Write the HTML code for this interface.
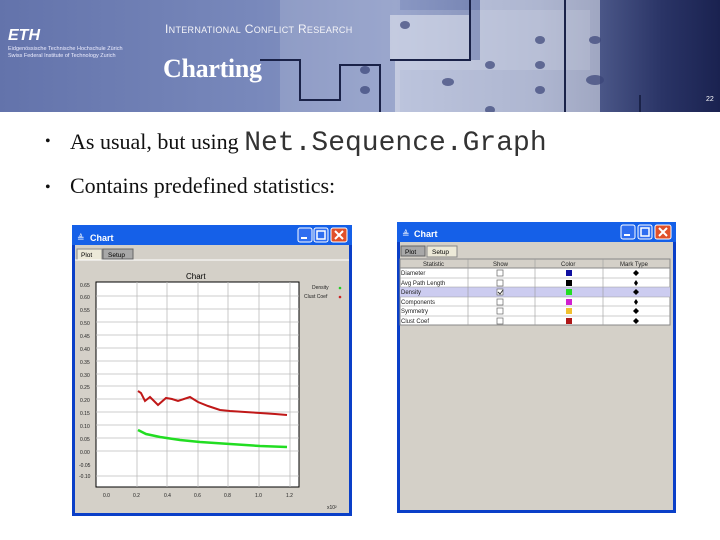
<!DOCTYPE html>
<html><head><style>
body{margin:0;width:720px;height:540px;background:#fff;position:relative;overflow:hidden;font-family:"Liberation Serif",serif}
.hdr{position:absolute;left:0;top:0;width:720px;height:112px;background:linear-gradient(90deg,#6373ab 0%,#7888bb 35%,#8a98c4 55%,#6a78a8 75%,#2a3466 92%,#1a2250 100%)}
.b{position:absolute;font-size:22px;color:#111;white-space:nowrap}
.d{position:absolute;font-size:16px;color:#111}
</style></head><body>
<div class="hdr">
<svg width="720" height="112" style="position:absolute;left:0;top:0">
<g fill="#fff" opacity="0.15"><rect x="280" y="0" width="120" height="112"/><rect x="390" y="10" width="200" height="60"/></g>
<g fill="#e6e9f2" opacity="0.55"><rect x="390" y="15" width="80" height="45"/><rect x="395" y="60" width="200" height="52"/><rect x="480" y="0" width="120" height="112"/></g>
<g fill="none" stroke="#1a2248" stroke-width="2"><path d="M260 60 H300 V100 H340 V65 H380 V112"/><path d="M390 60 H470 V0"/><path d="M490 125 V130 H575 V112"/><path d="M480 125 H640 V95"/><path d="M565 0 V112"/></g>
<g fill="#3a4478" opacity="0.7"><ellipse cx="405" cy="25" rx="5" ry="4"/><ellipse cx="448" cy="82" rx="6" ry="4"/><ellipse cx="490" cy="65" rx="5" ry="4"/><ellipse cx="540" cy="65" rx="5" ry="4"/><ellipse cx="540" cy="90" rx="5" ry="4"/><ellipse cx="490" cy="110" rx="5" ry="4"/><ellipse cx="595" cy="80" rx="9" ry="5"/><ellipse cx="595" cy="40" rx="6" ry="4"/><ellipse cx="540" cy="40" rx="5" ry="4"/><ellipse cx="365" cy="70" rx="5" ry="4"/><ellipse cx="365" cy="90" rx="5" ry="4"/></g>
<text x="8" y="40" font-family="Liberation Sans" font-weight="bold" font-style="italic" font-size="16" fill="#fff">ETH</text>
<text x="8" y="50" font-family="Liberation Sans" font-size="5.5" fill="#eef">Eidgenössische Technische Hochschule Zürich</text>
<text x="8" y="57" font-family="Liberation Sans" font-size="5.5" fill="#eef">Swiss Federal Institute of Technology Zurich</text>
<text x="165" y="33" font-family="Liberation Sans" font-size="12" fill="#f4f4f8" letter-spacing="0.3">I<tspan font-size="9">NTERNATIONAL</tspan> C<tspan font-size="9">ONFLICT</tspan> R<tspan font-size="9">ESEARCH</tspan></text>
<text x="163" y="77" font-family="Liberation Serif" font-weight="bold" font-size="26" fill="#fff" letter-spacing="-0.3">Charting</text>
<text x="706" y="101" font-family="Liberation Sans" font-size="7" fill="#fff">22</text>
</svg></div>
<div class="d" style="left:45px;top:133px">•</div>
<div class="b" style="left:70px;top:127px">As usual, but using <span style="font-family:'Liberation Mono',monospace;font-size:28px;color:#333;position:relative;top:1px">Net.Sequence.Graph</span></div>
<div class="d" style="left:45px;top:179px">•</div>
<div class="b" style="left:70px;top:173px">Contains predefined statistics:</div>

<svg width="720" height="540" style="position:absolute;left:0;top:0" font-family="Liberation Sans">
<rect x="72" y="225" width="280" height="291" fill="#0a3fc8"/>
<rect x="75" y="245" width="274" height="268" fill="#d4d0c8"/>
<rect x="72" y="225" width="280" height="20" fill="#1560e8"/>
<text x="90" y="241" font-size="9" font-weight="bold" fill="#fff">Chart</text>
<text x="77" y="241" font-size="9" fill="#fff">≜</text>
<rect x="298" y="228" width="14" height="14" rx="2" fill="#2f6ef0" stroke="#fff"/><rect x="301" y="237" width="6" height="2" fill="#fff"/>
<rect x="314" y="228" width="14" height="14" rx="2" fill="#2f6ef0" stroke="#fff"/><rect x="317" y="231" width="8" height="8" fill="none" stroke="#fff" stroke-width="1.5"/>
<rect x="331" y="228" width="16" height="14" rx="2" fill="#e0502a" stroke="#fff"/><path d="M335 231 L343 239 M343 231 L335 239" stroke="#fff" stroke-width="2"/>
<rect x="77" y="249" width="25" height="11" fill="#ece9d8" stroke="#888"/><text x="81" y="257" font-size="6.5">Plot</text>
<rect x="103" y="249" width="30" height="10" fill="#a8a8a8" stroke="#666"/><text x="108" y="257" font-size="6.5">Setup</text>
<line x1="75" y1="260" x2="349" y2="260" stroke="#fff"/>
<text x="186" y="279" font-size="8">Chart</text>
<rect x="96" y="282" width="203" height="205" fill="#fff" stroke="#000"/>
<g stroke="#bbb" stroke-width="0.8">
<line x1="137" y1="282" x2="137" y2="487"/><line x1="167" y1="282" x2="167" y2="487"/><line x1="198" y1="282" x2="198" y2="487"/><line x1="228" y1="282" x2="228" y2="487"/><line x1="259" y1="282" x2="259" y2="487"/><line x1="290" y1="282" x2="290" y2="487"/>
<line x1="96" y1="296" x2="299" y2="296"/><line x1="96" y1="309" x2="299" y2="309"/><line x1="96" y1="322" x2="299" y2="322"/><line x1="96" y1="335" x2="299" y2="335"/><line x1="96" y1="348" x2="299" y2="348"/><line x1="96" y1="361" x2="299" y2="361"/><line x1="96" y1="374" x2="299" y2="374"/><line x1="96" y1="386" x2="299" y2="386"/><line x1="96" y1="399" x2="299" y2="399"/><line x1="96" y1="412" x2="299" y2="412"/><line x1="96" y1="425" x2="299" y2="425"/><line x1="96" y1="438" x2="299" y2="438"/><line x1="96" y1="451" x2="299" y2="451"/><line x1="96" y1="476" x2="299" y2="476"/>
</g>
<g font-size="5" fill="#222">
<text x="80" y="287">0.65</text><text x="80" y="299">0.60</text><text x="80" y="312">0.55</text><text x="80" y="325">0.50</text><text x="80" y="338">0.45</text><text x="80" y="351">0.40</text><text x="80" y="364">0.35</text><text x="80" y="377">0.30</text><text x="80" y="389">0.25</text><text x="80" y="402">0.20</text><text x="80" y="415">0.15</text><text x="80" y="428">0.10</text><text x="80" y="441">0.05</text><text x="80" y="454">0.00</text><text x="79" y="467">-0.05</text><text x="79" y="478">-0.10</text>
<text x="103" y="497">0.0</text><text x="133" y="497">0.2</text><text x="164" y="497">0.4</text><text x="194" y="497">0.6</text><text x="224" y="497">0.8</text><text x="255" y="497">1.0</text><text x="286" y="497">1.2</text>
<text x="327" y="509">x10²</text>
<text x="312" y="289">Density</text><text x="304" y="298">Clust Coef</text>
</g>
<circle cx="340" cy="288" r="1.3" fill="#2c2"/><circle cx="340" cy="297" r="1.3" fill="#c22"/>
<path d="M138 391 L141 393 L145 401 L150 397 L158 405 L166 398 L172 399 L178 401 L190 397 L198 402 L208 406 L220 410 L230 411 L245 412 L260 413 L275 414 L287 415" fill="none" stroke="#c01818" stroke-width="2"/>
<path d="M138 430 L146 434 L160 437 L180 440 L200 442 L230 444 L260 446 L287 447" fill="none" stroke="#22dd22" stroke-width="2.5"/>
<rect x="397" y="222" width="279" height="291" fill="#0a3fc8"/>
<rect x="400" y="242" width="273" height="268" fill="#d4d0c8"/>
<rect x="397" y="222" width="279" height="20" fill="#1560e8"/>
<text x="414" y="237" font-size="9" font-weight="bold" fill="#fff">Chart</text>
<text x="402" y="237" font-size="9" fill="#fff">≜</text>
<rect x="621" y="225" width="14" height="14" rx="2" fill="#2f6ef0" stroke="#fff"/><rect x="624" y="234" width="6" height="2" fill="#fff"/>
<rect x="638" y="225" width="14" height="14" rx="2" fill="#2f6ef0" stroke="#fff"/><rect x="641" y="228" width="8" height="8" fill="none" stroke="#fff" stroke-width="1.5"/>
<rect x="655" y="225" width="16" height="14" rx="2" fill="#e0502a" stroke="#fff"/><path d="M659 228 L667 236 M667 228 L659 236" stroke="#fff" stroke-width="2"/>
<rect x="401" y="246" width="24" height="10" fill="#a8a8a8" stroke="#666"/><text x="405" y="254" font-size="6.5">Plot</text>
<rect x="427" y="246" width="30" height="11" fill="#ece9d8" stroke="#888"/><text x="432" y="254" font-size="6.5">Setup</text>
<rect x="400" y="259" width="270" height="66" fill="#fff" stroke="#888"/>
<rect x="400" y="259" width="270" height="9" fill="#d4d0c8" stroke="#888"/>
<rect x="400" y="287" width="270" height="10" fill="#ccccf0"/>
<g stroke="#999" stroke-width="0.6"><line x1="468" y1="259" x2="468" y2="325"/><line x1="535" y1="259" x2="535" y2="325"/><line x1="603" y1="259" x2="603" y2="325"/>
<line x1="400" y1="278" x2="670" y2="278"/><line x1="400" y1="287" x2="670" y2="287"/><line x1="400" y1="297" x2="670" y2="297"/><line x1="400" y1="306" x2="670" y2="306"/><line x1="400" y1="316" x2="670" y2="316"/></g>
<g font-size="6" fill="#222"><text x="423" y="266">Statistic</text><text x="493" y="266">Show</text><text x="561" y="266">Color</text><text x="620" y="266">Mark Type</text>
<text x="401" y="275">Diameter</text><text x="401" y="285">Avg Path Length</text><text x="401" y="294">Density</text><text x="401" y="304">Components</text><text x="401" y="313">Symmetry</text><text x="401" y="323">Clust Coef</text></g>
<g fill="#fff" stroke="#666" stroke-width="0.7"><rect x="497" y="270" width="6" height="6"/><rect x="497" y="280" width="6" height="6"/><rect x="497" y="289" width="6" height="6"/><rect x="497" y="299" width="6" height="6"/><rect x="497" y="308" width="6" height="6"/><rect x="497" y="318" width="6" height="6"/></g>
<path d="M498 292 L500 294 L503 290" stroke="#333" fill="none"/>
<rect x="566" y="270" width="6" height="6" fill="#1010a0"/><rect x="566" y="280" width="6" height="6" fill="#000"/><rect x="566" y="289" width="6" height="6" fill="#2d2"/><rect x="566" y="299" width="6" height="6" fill="#d020d0"/><rect x="566" y="308" width="6" height="6" fill="#f0c030"/><rect x="566" y="318" width="6" height="6" fill="#b01818"/>
<g fill="#000"><path d="M636 270 l3 3 l-3 3 l-3 -3z"/><path d="M636 280 l2 3 l-2 3 l-2 -3z"/><path d="M636 289 l3 3 l-3 3 l-3 -3z"/><path d="M636 299 l2 3 l-2 3 l-2 -3z"/><path d="M636 308 l3 3 l-3 3 l-3 -3z"/><path d="M636 318 l3 3 l-3 3 l-3 -3z"/></g>
</svg>
</body></html>
